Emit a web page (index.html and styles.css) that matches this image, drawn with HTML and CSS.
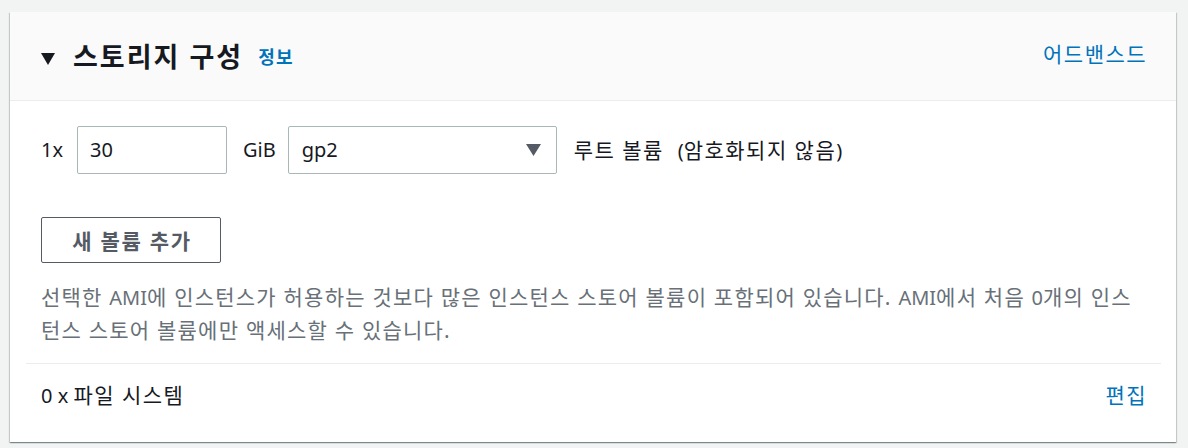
FILE: index.html
```html
<!DOCTYPE html>
<html lang="ko">
<head>
<meta charset="utf-8">
<title>스토리지 구성</title>
<link rel="stylesheet" href="styles.css">
</head>
<body>
<section class="card">
  <header class="card-header">
    <div class="title-group">
      <svg class="caret" width="14" height="12" viewBox="0 0 14 12"><polygon points="0,0 14,0 7,12" fill="#16191f"/></svg>
      <h2 class="title">스토리지 구성</h2>
      <a class="info-link">정보</a>
    </div>
    <a class="link advanced ko">어드밴스드</a>
  </header>
  <div class="card-body">
    <div class="volume-row">
      <span class="label">1x</span>
      <div class="input">30</div>
      <span class="label unit">GiB</span>
      <div class="select">
        <span>gp2</span>
        <svg width="15" height="12" viewBox="0 0 15 12"><polygon points="0,0 15,0 7.5,12" fill="#545b64"/></svg>
      </div>
      <span class="label note ko">루트 볼륨&nbsp;&nbsp;<span class="latin">(</span>암호화되지 않음<span class="latin">)</span></span>
    </div>
    <button class="btn">새 볼륨 추가</button>
    <p class="desc ko">선택한 <span class="latin">AMI</span>에 인스턴스가 허용하는 것보다 많은 인스턴스 스토어 볼륨이 포함되어 있습니다. <span class="latin">AMI</span>에서 처음 <span class="latin">0</span>개의 인스턴스 스토어 볼륨에만 액세스할 수 있습니다.</p>
    <hr class="divider">
    <div class="fs-row">
      <span class="label"><span class="latin">0 x </span><span class="ko">파일 시스템</span></span>
      <a class="link ko">편집</a>
    </div>
  </div>
</section>
</body>
</html>
```

FILE: styles.css
```css
* { box-sizing: border-box; }
html, body { margin: 0; padding: 0; }
body {
  background: #f2f3f3;
  font-family: "Noto Sans", "Noto Sans CJK KR", sans-serif;
  color: #16191f;
  font-size: 20px;
  line-height: 32px;
  width: 1188px;
  height: 448px;
  overflow: hidden;
}
.ko { font-size: 21px; letter-spacing: 0.07em; }
.latin { font-size: 20px; letter-spacing: 0; }
.card {
  margin: 12px 12px 0 10px;
  width: 1166px;
  height: 430px;
  background: #ffffff;
  box-shadow: 0 1px 1px 0 rgba(0, 28, 36, 0.3), 1px 1px 1px 0 rgba(0, 28, 36, 0.15), -1px 1px 1px 0 rgba(0, 28, 36, 0.15);
}
.card-header {
  height: 89px;
  background: #fafafa;
  border-bottom: 1px solid #eaeded;
  display: flex;
  justify-content: space-between;
  align-items: flex-start;
  padding: 29px 29px 0 31px;
}
.title-group {
  display: flex;
  align-items: center;
}
.caret { margin-right: 18px; margin-top: 3px; }
.title {
  margin: 0;
  font-size: 27px;
  font-weight: 700;
  line-height: 32px;
  letter-spacing: 0.075em;
}
.info-link {
  margin-left: 15px;
  font-size: 18px;
  font-weight: 700;
  color: #0073bb;
  line-height: 32px;
  letter-spacing: 0.06em;
}
.link {
  color: #0073bb;
}
.advanced { margin-top: -3px; }
.card-body {
  padding: 25px 29px 0 31px;
}
.volume-row {
  display: flex;
  align-items: center;
  height: 48px;
}
.input {
  width: 150px;
  height: 48px;
  border: 1px solid #aab7b8;
  border-radius: 2px;
  padding: 0 12px;
  line-height: 46px;
  margin-left: 14px;
}
.unit { margin-left: 16px; }
.select {
  width: 269px;
  height: 48px;
  border: 1px solid #aab7b8;
  border-radius: 2px;
  margin-left: 12px;
  padding: 0 15px 0 13px;
  display: flex;
  align-items: center;
  justify-content: space-between;
}
.note { margin-left: 17px; }
.btn {
  display: block;
  margin-top: 43px;
  width: 180px;
  height: 46px;
  border: 1px solid #545b64;
  border-radius: 2px;
  background: #ffffff;
  color: #545b64;
  font-family: inherit;
  font-size: 21px;
  font-weight: 700;
  letter-spacing: 0.08em;
  padding: 0 0 0 2px;
}
.desc {
  margin: 18px 0 0 0;
  color: #687078;
  line-height: 32px;
  letter-spacing: 0.058em;
}
.desc .latin { letter-spacing: 0; }
.divider {
  border: 0;
  border-top: 1px solid #eaeded;
  margin: 17px -14px 0 -15px;
}
.fs-row {
  display: flex;
  justify-content: space-between;
  padding-top: 15px;
}
```
